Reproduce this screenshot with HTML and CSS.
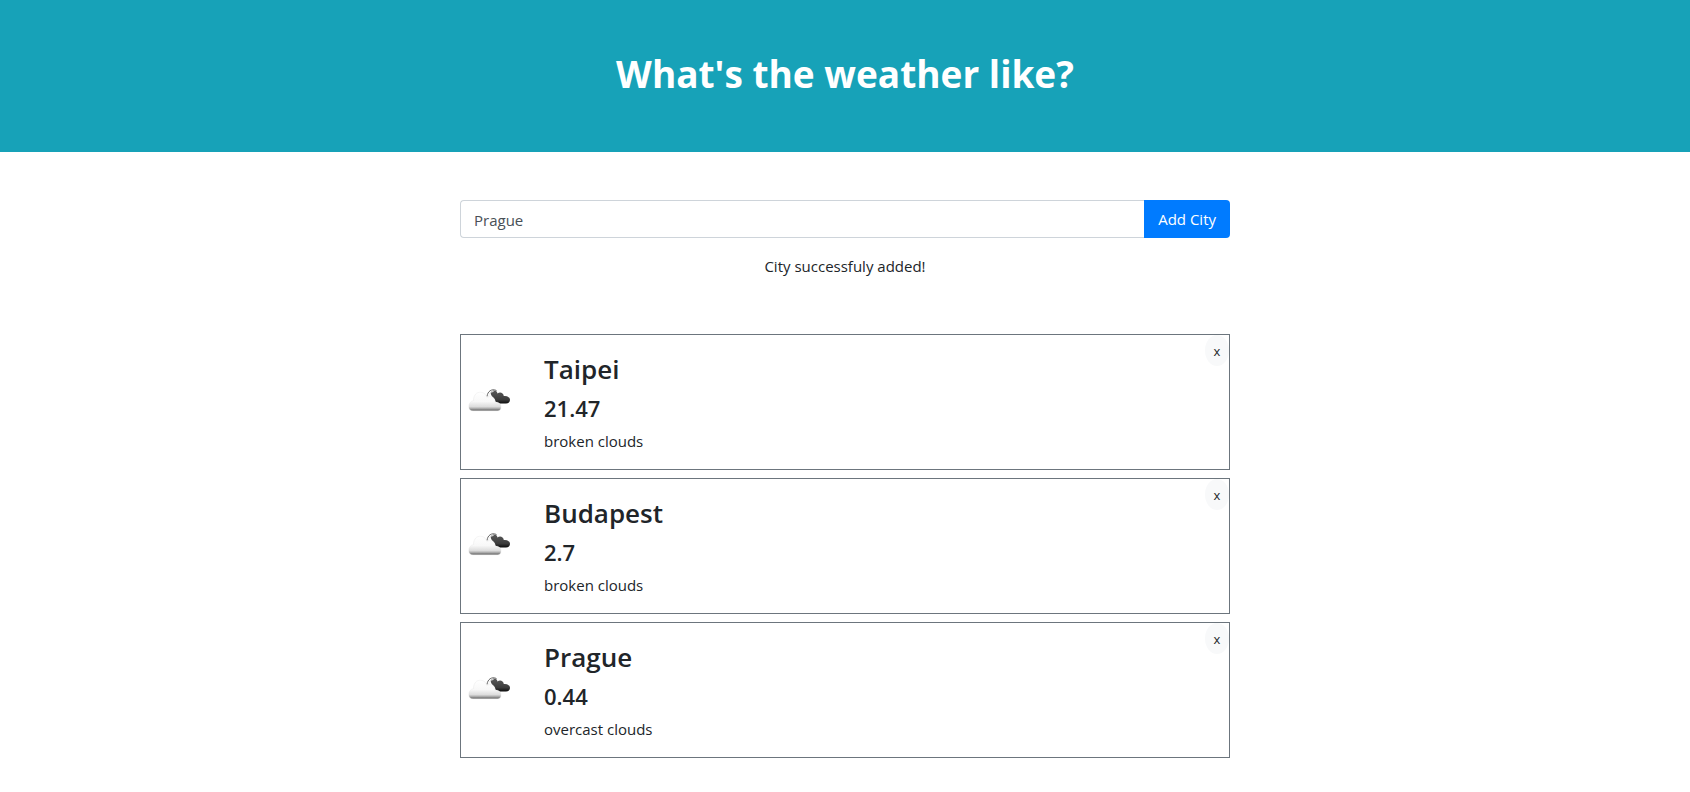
FILE: index.html
```html
<!DOCTYPE html>
<html lang="en">
<head>
<meta charset="utf-8">
<meta name="viewport" content="width=device-width, initial-scale=1">
<title>Weather</title>
<link rel="stylesheet" href="styles.css">
</head>
<body>
<svg class="defs" aria-hidden="true">
  <defs>
    <linearGradient id="light" x1="0" y1="0" x2="0" y2="1">
      <stop offset="0" stop-color="#fff"/>
      <stop offset="0.5" stop-color="#f8f8f8"/>
      <stop offset="0.78" stop-color="#dcdcdc"/>
      <stop offset="0.88" stop-color="#aaa"/>
      <stop offset="1" stop-color="#5c5c5c"/>
    </linearGradient>
    <linearGradient id="dark" x1="0" y1="0" x2="0" y2="1">
      <stop offset="0" stop-color="#5a5a5a"/>
      <stop offset="0.7" stop-color="#3c3c3c"/>
      <stop offset="1" stop-color="#0c0c0c"/>
    </linearGradient>
    <symbol id="clouds" viewBox="0 0 50 50">
      <path d="M24.500 15.500C27 12.500 31 13 31.500 16.500C34 14.500 37.500 16 37.800 19C41.500 18.500 44 20.500 44 22.700C44 25 42.500 26.500 40 26.500H32C30.500 26.500 29.500 25 29 23C28.500 20.500 25 20 24.500 15.500Z" fill="url(#dark)"/>
      <path d="M21 19.500C21.500 14.500 25.500 11.300 30.500 13.500" fill="none" stroke="#666" stroke-width="1"/>
      <path d="M22.500 19.500C23 16.500 25 14.500 27.500 14.500" fill="none" stroke="#eee" stroke-width="1"/>
      <path d="M7 33.800C4 33.800 2.800 32 2.800 29.500C2.800 26.500 4.500 24.200 7.500 23.500C7.500 18 10.500 15.200 14.500 15.200C18 15.200 20 17.500 20.800 20.500C25 18.200 29 20.500 29.200 25C33 25 35 27 35 29.800C35 32.300 33.800 33.800 31.500 33.800Z" fill="url(#light)" stroke="#ddd" stroke-opacity="0.6" stroke-width="0.500"/>
    </symbol>
  </defs>
</svg>

<header class="banner">
  <h1 class="banner-title">What's the weather like?</h1>
</header>

<main class="container">
  <form class="city-form">
    <input class="city-input" type="text" aria-label="City name" value="Prague">
    <button class="city-submit" type="button">Add City</button>
  </form>
  <p class="message" role="status">City successfuly added!</p>

  <section class="cities">
    <article class="card">
      <svg class="card-icon" role="img" aria-label="broken clouds"><use href="#clouds"/></svg>
      <div class="card-body">
        <h2 class="card-city">Taipei</h2>
        <h3 class="card-temp">21.47</h3>
        <p class="card-text">broken clouds</p>
      </div>
      <button class="card-remove" type="button" aria-label="Remove Taipei">x</button>
    </article>
    <article class="card">
      <svg class="card-icon" role="img" aria-label="broken clouds"><use href="#clouds"/></svg>
      <div class="card-body">
        <h2 class="card-city">Budapest</h2>
        <h3 class="card-temp">2.7</h3>
        <p class="card-text">broken clouds</p>
      </div>
      <button class="card-remove" type="button" aria-label="Remove Budapest">x</button>
    </article>
    <article class="card">
      <svg class="card-icon" role="img" aria-label="overcast clouds"><use href="#clouds"/></svg>
      <div class="card-body">
        <h2 class="card-city">Prague</h2>
        <h3 class="card-temp">0.44</h3>
        <p class="card-text">overcast clouds</p>
      </div>
      <button class="card-remove" type="button" aria-label="Remove Prague">x</button>
    </article>
  </section>
</main>
</body>
</html>
```
FILE: styles.css
```css
* {
  box-sizing: border-box;
}

body {
  margin: 0;
  background: #fff;
  color: #212529;
  font-family: "Segoe UI", "Open Sans", "Noto Sans", sans-serif;
  font-size: 15px;
  line-height: 24px;
}

h1, h2, h3, p {
  margin: 0;
}

.defs {
  position: absolute;
  width: 0;
  height: 0;
}

.banner {
  padding: 50px 16px 54px;
  background: #17a2b8;
  color: #fff;
  text-align: center;
}

.banner-title {
  font-size: 37px;
  line-height: 48px;
  font-weight: 700;
}

.container {
  max-width: 802px;
  margin: 0 auto;
  padding: 48px 16px 32px;
}

.city-form {
  display: flex;
}

.city-input {
  flex: 1;
  min-width: 0;
  height: 38px;
  padding: 6px 13px 4px;
  border: 1px solid #ced4da;
  border-right: 0;
  border-radius: 4px 0 0 4px;
  background: #fff;
  color: #495057;
  font: inherit;
}

.city-submit {
  height: 38px;
  padding: 0 14px;
  border: 0;
  border-radius: 0 4px 4px 0;
  background: #007bff;
  color: #fff;
  font: inherit;
}

.message {
  margin: 16px 0 56px;
  text-align: center;
}

.cities {
  display: grid;
  gap: 8px;
}

.card {
  position: relative;
  display: flex;
  align-items: center;
  border: 1px solid #6c757d;
}

.card-icon {
  flex: none;
  width: 50px;
  height: 50px;
  margin: 0 28px 0 5px;
}

.card-body {
  padding: 16px 0;
}

.card-city {
  margin-bottom: 5px;
  font-size: 26px;
  line-height: 36px;
  font-weight: 600;
}

.card-temp {
  margin-bottom: 5px;
  font-size: 22px;
  line-height: 32px;
  font-weight: 600;
}

.card-remove {
  position: absolute;
  top: 0;
  right: 0;
  width: 24px;
  height: 31px;
  padding: 0;
  border: 0;
  border-radius: 50%;
  background: #f8f9fa;
  color: #212529;
  font: inherit;
  font-size: 13px;
}
```
